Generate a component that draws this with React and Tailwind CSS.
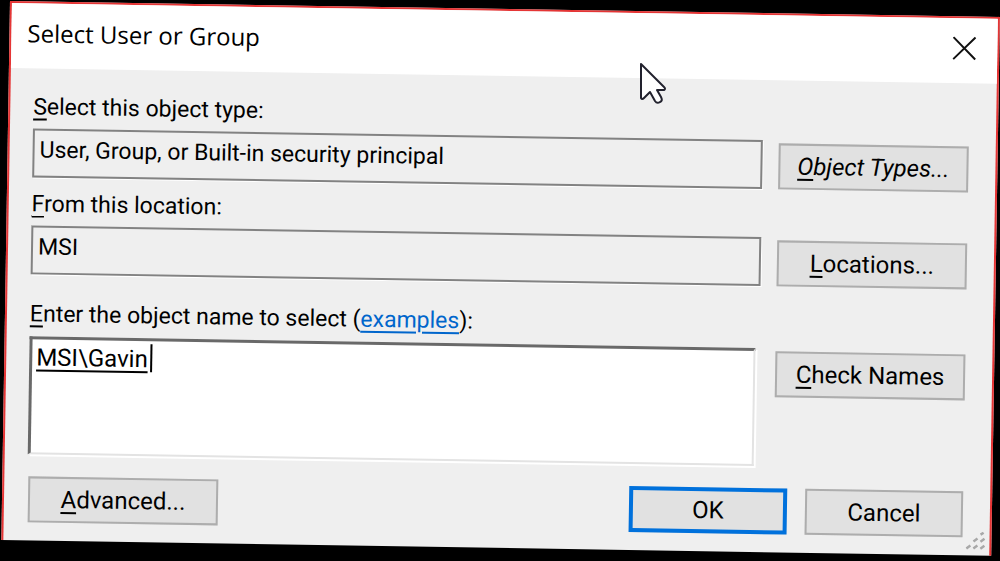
import React from "react";

const buttonBase =
  "h-[46px] bg-[#e1e1e1] text-center text-2xl leading-7 text-black";
const plainBorder = "border-2 border-[#adadad]";
const fieldClass =
  "block h-[49px] w-full min-w-0 border-2 border-[#828282] bg-[#efefef] pl-[5px] pb-[6px] text-[23px] leading-7 text-black shadow-[1px_1px_0_#ffffff] outline-none";

function Mnemonic({ text }) {
  return (
    <>
      <span className="underline decoration-2 underline-offset-4">{text[0]}</span>
      {text.slice(1)}
    </>
  );
}

function SideButton({ text, italic }) {
  return (
    <button
      type="button"
      className={`${buttonBase} ${plainBorder} mt-[3px] w-[190px] shrink-0 ${italic ? "italic" : ""}`}
    >
      <Mnemonic text={text} />
    </button>
  );
}

function CloseIcon() {
  return (
    <svg width="24" height="24" viewBox="0 0 24 24" fill="none" stroke="#111111" strokeWidth="2" aria-hidden="true">
      <path d="M1 1L23 23M23 1L1 23" />
    </svg>
  );
}

function ResizeGrip() {
  return (
    <svg
      className="absolute bottom-1 right-1 size-5"
      viewBox="0 0 20 20"
      stroke="#a8a8a8"
      strokeWidth="2.5"
      aria-hidden="true"
    >
      <path d="M15 3L18 1M8 10L12 7M15 10L19 7M1 17L5 14M8 17L12 14M15 17L19 14" />
    </svg>
  );
}

function Pointer() {
  return (
    <svg
      className="absolute left-[639px] top-[61px] h-[44px] w-[28px]"
      viewBox="0 0 28 44"
      fill="#ffffff"
      stroke="#22222e"
      strokeWidth="2"
      strokeLinejoin="round"
      aria-hidden="true"
    >
      <path d="M2 3V37Q3 39 5 37L11 31L16 40Q18 43 21 41Q24 40 22 36L18 29H25Q27 28 25 26Z" />
    </svg>
  );
}

export default function App() {
  return (
    <div className="relative min-h-screen overflow-hidden bg-black pl-[10px] pt-px font-['Roboto',sans-serif]">
      <form
        role="dialog"
        aria-labelledby="dialog-title"
        onSubmit={(e) => e.preventDefault()}
        className="relative origin-top-left rotate-[0.92deg] border-x-2 border-t-2 border-[#e53535] bg-[#efefef] text-[23px] leading-7 text-black"
      >
        <header className="flex h-[65px] items-center justify-between bg-white pb-[6px] pl-4 pr-[21px]">
          <h1 id="dialog-title" className="font-['Open_Sans',sans-serif] text-2xl leading-7">
            Select User or Group
          </h1>
          <button type="button" aria-label="Close">
            <CloseIcon />
          </button>
        </header>

        <div className="pb-[18px] pl-[23px] pr-[27px] pt-[25px]">
          <label htmlFor="type" className="mb-[7px] block">
            <Mnemonic text="Select this object type:" />
          </label>
          <div className="flex items-start gap-4">
            <input id="type" readOnly value="User, Group, or Built-in security principal" className={fieldClass} />
            <SideButton text="Object Types..." italic />
          </div>

          <label htmlFor="location" className="mb-[7px] mt-[13px] block">
            <Mnemonic text="From this location:" />
          </label>
          <div className="flex items-start gap-4">
            <input id="location" readOnly value="MSI" className={fieldClass} />
            <SideButton text="Locations..." />
          </div>

          <div className="mb-2 mt-[26px]">
            <label htmlFor="name">
              <Mnemonic text="Enter the object name to select " />
            </label>
            (
            <a href="#examples" className="text-[#0066cc] underline decoration-2 underline-offset-4">
              examples
            </a>
            ):
          </div>
          <div className="flex items-start gap-5">
            <div className="relative min-w-0 grow">
              <textarea
                id="name"
                defaultValue="MSI\Gavin"
                spellCheck={false}
                className="block h-[118px] w-full resize-none border-b-2 border-l-[3px] border-r-2 border-t-[3px] border-b-[#e3e3e3] border-l-[#696969] border-r-[#e3e3e3] border-t-[#696969] bg-white px-1 py-1 text-2xl leading-7 underline decoration-2 underline-offset-4 shadow-[2px_2px_0_#ffffff] outline-none"
              />
              <span className="absolute left-[121px] top-[6px] h-7 w-[2px] bg-black" aria-hidden="true" />
            </div>
            <SideButton text="Check Names" />
          </div>

          <div className="mt-[22px] flex items-start gap-[18px]">
            <button type="button" className={`${buttonBase} ${plainBorder} ml-px mr-auto w-[190px]`}>
              <Mnemonic text="Advanced..." />
            </button>
            <button type="submit" className={`${buttonBase} w-[158px] border-4 border-[#0071dc]`}>
              OK
            </button>
            <button type="button" className={`${buttonBase} ${plainBorder} w-[158px]`}>
              Cancel
            </button>
          </div>
        </div>
        <ResizeGrip />
      </form>
      <Pointer />
    </div>
  );
}
